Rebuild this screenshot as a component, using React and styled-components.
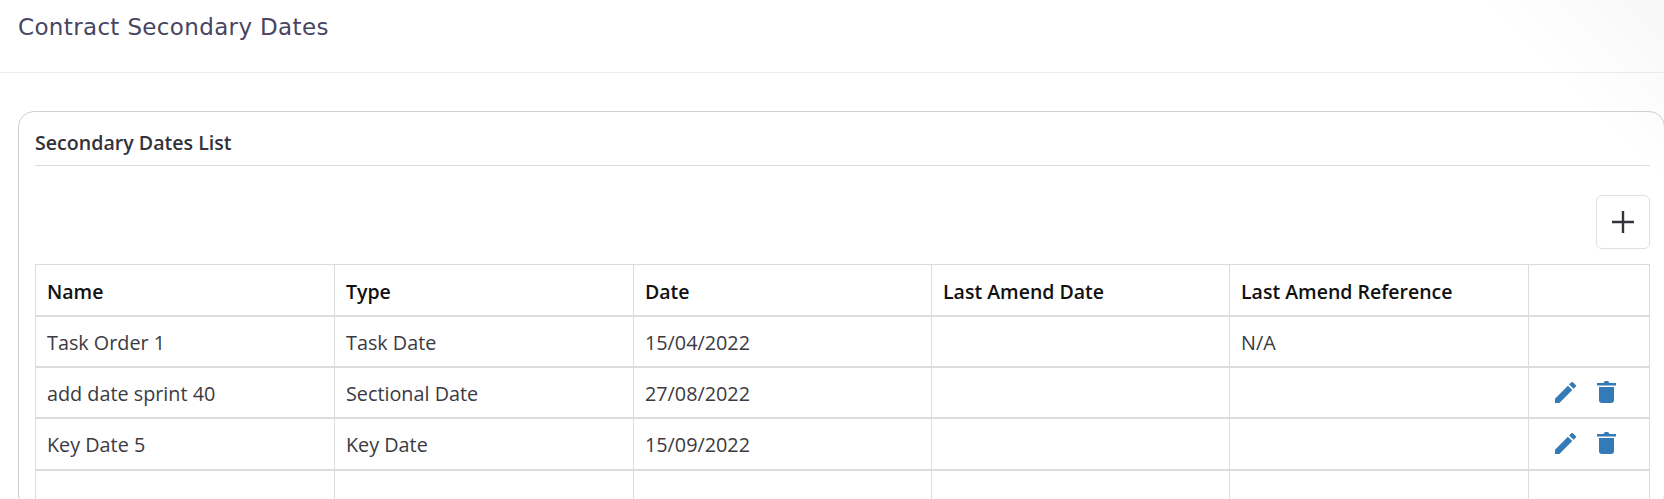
import styled, { createGlobalStyle } from 'styled-components';

const rows = [
   { name: 'Task Order 1', type: 'Task Date', date: '15/04/2022', reference: 'N/A', editable: false },
   { name: 'add date sprint 40', type: 'Sectional Date', date: '27/08/2022', reference: '', editable: true },
   { name: 'Key Date 5', type: 'Key Date', date: '15/09/2022', reference: '', editable: true },
];

function PencilIcon() {
   return (
      <svg width="21" height="21" viewBox="3 3 18 18" fill="#337ab7" aria-hidden="true">
         <path d="M3 17.25V21h3.75L17.81 9.94l-3.75-3.75L3 17.25zM20.71 7.04c.39-.39.39-1.02 0-1.41l-2.34-2.34a.9959.9959 0 0 0-1.41 0l-1.83 1.83 3.75 3.75 1.83-1.83z" />
      </svg>
   );
}

function TrashIcon() {
   return (
      <svg width="19" height="22" viewBox="0 0 19 22" fill="#337ab7" aria-hidden="true">
         <path d="M6.5 2 7.5.5C7.7.2 8 0 8.4 0h2.2c.4 0 .7.2.9.5l1 1.5H19v2.6H0V2h6.5z" />
         <path d="M2 6h15v13.2c0 1.6-1.2 2.8-2.8 2.8H4.8C3.2 22 2 20.8 2 19.2V6z" />
      </svg>
   );
}

function PlusIcon() {
   return (
      <svg width="22" height="22" viewBox="0 0 22 22" stroke="#33333b" strokeWidth="2.4" aria-hidden="true">
         <path d="M0 11h22M11 0v22" />
      </svg>
   );
}

export default function App() {
   return (
      <>
         <GlobalStyle />
         <Page>
            <Header>
               <PageTitle>Contract Secondary Dates</PageTitle>
            </Header>
            <Card>
               <CardTitle>Secondary Dates List</CardTitle>
               <Toolbar>
                  <AddButton type="button" aria-label="Add">
                     <PlusIcon />
                  </AddButton>
               </Toolbar>
               <DatesTable>
                  <colgroup>
                     <col width="299" />
                     <col width="299" />
                     <col width="298" />
                     <col width="298" />
                     <col width="299" />
                     <col />
                  </colgroup>
                  <thead>
                     <tr>
                        <HeadCell>Name</HeadCell>
                        <HeadCell>Type</HeadCell>
                        <HeadCell>Date</HeadCell>
                        <HeadCell>Last Amend Date</HeadCell>
                        <HeadCell>Last Amend Reference</HeadCell>
                        <HeadCell />
                     </tr>
                  </thead>
                  <tbody>
                     {rows.map((row) => (
                        <tr key={row.name}>
                           <Cell>{row.name}</Cell>
                           <Cell>{row.type}</Cell>
                           <Cell>{row.date}</Cell>
                           <Cell />
                           <Cell>{row.reference}</Cell>
                           <Cell>
                              {row.editable && (
                                 <Actions>
                                    <PencilIcon />
                                    <TrashIcon />
                                 </Actions>
                              )}
                           </Cell>
                        </tr>
                     ))}
                     <tr>
                        <Cell />
                        <Cell />
                        <Cell />
                        <Cell />
                        <Cell />
                        <Cell />
                     </tr>
                  </tbody>
               </DatesTable>
            </Card>
         </Page>
      </>
   );
}

const GlobalStyle = createGlobalStyle`
   html, body {
      margin: 0;
      height: 499px;
      overflow: hidden;
      background: #fff;
   }
`;

const Page = styled.div`
   width: 1664px;
   height: 499px;
   overflow: hidden;
   font-family: 'Open Sans', 'Noto Sans', sans-serif;
   background: linear-gradient(225deg, #f7f7f7 0, #fff 130px);
`;

const Header = styled.header`
   height: 73px;
   padding: 13px 18px 0;
   box-sizing: border-box;
   border-bottom: 1px solid #ebebed;
`;

const PageTitle = styled.h1`
   margin: 0;
   font-family: 'DejaVu Sans', sans-serif;
   font-size: 23px;
   letter-spacing: 0.35px;
   line-height: 29px;
   font-weight: 400;
   color: #47455f;
`;

const Card = styled.section`
   margin: 38px 0 0 18px;
   padding: 17px 14px 0 16px;
   width: 1647px;
   box-sizing: border-box;
   height: 400px;
   border: 1px solid #cfcfcf;
   border-radius: 16px;
`;

const CardTitle = styled.h2`
   margin: 0;
   height: 37px;
   box-sizing: border-box;
   border-bottom: 1px solid #dcdcdc;
   font-size: 19.6px;
   line-height: 27px;
   font-weight: 600;
   color: #33323a;
`;

const Toolbar = styled.div`
   display: flex;
   justify-content: flex-end;
   padding: 29px 0 15px;
`;

const AddButton = styled.button`
   display: flex;
   align-items: center;
   justify-content: center;
   width: 54px;
   height: 54px;
   padding: 0;
   background: #fff;
   border: 1px solid #e0e0e0;
   border-radius: 6px;
`;

const DatesTable = styled.table`
   width: 100%;
   table-layout: fixed;
   border-collapse: collapse;
   border: 1px solid #dcdcdc;
`;

const HeadCell = styled.th`
   height: 51px;
   padding: 3px 11px 0;
   box-sizing: border-box;
   border: 1px solid #dcdcdc;
   border-bottom-width: 2px;
   text-align: left;
   font-size: 19.5px;
   font-weight: 600;
   color: #111;
`;

const Cell = styled.td`
   height: 51.4px;
   padding: 2px 11px 0;
   box-sizing: border-box;
   border: 1px solid #dcdcdc;
   border-bottom-width: 2px;
   font-size: 19.8px;
   color: #3b3a42;
`;

const Actions = styled.div`
   display: flex;
   align-items: center;
   justify-content: flex-end;
   gap: 21px;
   margin-top: -3px;
   padding-right: 22px;
`;
